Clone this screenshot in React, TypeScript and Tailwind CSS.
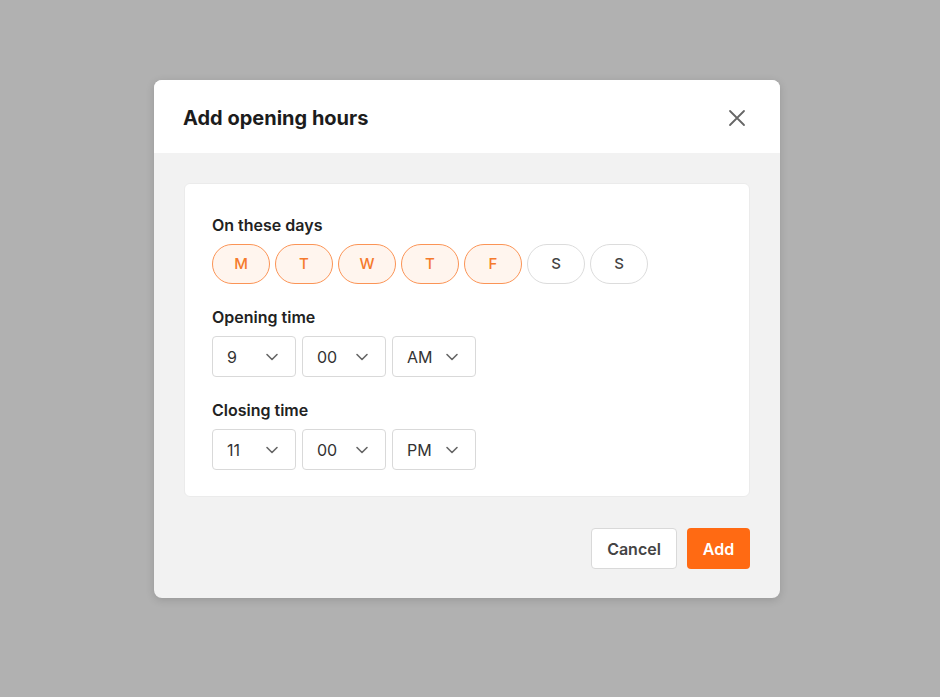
import { useState } from 'react';

const days = [
  { key: 'mon', label: 'M', on: true },
  { key: 'tue', label: 'T', on: true },
  { key: 'wed', label: 'W', on: true },
  { key: 'thu', label: 'T', on: true },
  { key: 'fri', label: 'F', on: true },
  { key: 'sat', label: 'S', on: false },
  { key: 'sun', label: 'S', on: false },
];

function Chevron() {
  return (
    <svg width="16" height="16" viewBox="0 0 16 16" fill="none" className="text-[#666]">
      <path d="M3 5.5 8 10.5 13 5.5" stroke="currentColor" strokeWidth="1.6" strokeLinecap="round" strokeLinejoin="round" />
    </svg>
  );
}

function TimeSelect({ value }: { value: string }) {
  return (
    <div className="flex h-[41px] w-[84px] items-center justify-between rounded-[4px] border border-[#d9d9d9] bg-white pl-[14px] pr-[15px] text-[16px] text-[#333]">
      <span>{value}</span>
      <Chevron />
    </div>
  );
}

export default function App() {
  const [selected, setSelected] = useState(days.map((d) => d.on));

  return (
    <div className="h-[697px] w-full bg-[#b1b1b1] pl-[154px] pt-[80px] font-['Inter',sans-serif]">
      <div className="w-[626px] overflow-hidden rounded-[8px] bg-[#f2f2f2] shadow-[0_2px_8px_rgba(0,0,0,0.15)]">
        <div className="flex h-[73px] items-center justify-between bg-white pl-[29px] pr-[33px] pt-[3px]">
          <h1 className="text-[20px] font-bold text-[#1c1c1c]">Add opening hours</h1>
          <svg width="20" height="20" viewBox="0 0 20 20" fill="none" className="text-[#666]">
            <path d="M3 3 17 17M17 3 3 17" stroke="currentColor" strokeWidth="1.8" strokeLinecap="round" />
          </svg>
        </div>

        <div className="px-[30px] pb-[29px] pt-[30px]">
          <div className="rounded-[6px] border border-[#ebebeb] bg-white px-[27px] pb-[26px] pt-[29px]">
            <div className="text-[16px] font-semibold leading-6 text-[#222]">On these days</div>
            <div className="mt-[7px] flex gap-[5px]">
              {days.map((d, i) => (
                <button
                  key={d.key}
                  onClick={() => setSelected((s) => s.map((v, j) => (j === i ? !v : v)))}
                  className={
                    selected[i]
                      ? 'h-[40px] w-[58px] rounded-full border border-[#fb9456] bg-[#fff5ee] text-[15px] font-medium text-[#f57a2c]'
                      : 'h-[40px] w-[58px] rounded-full border border-[#dcdcdc] bg-white text-[15px] font-medium text-[#444]'
                  }
                >
                  {d.label}
                </button>
              ))}
            </div>

            <div className="mt-[21px] text-[16px] font-semibold leading-6 text-[#222]">Opening time</div>
            <div className="mt-[7px] flex gap-[6px]">
              <TimeSelect value="9" />
              <TimeSelect value="00" />
              <TimeSelect value="AM" />
            </div>

            <div className="mt-[21px] text-[16px] font-semibold leading-6 text-[#222]">Closing time</div>
            <div className="mt-[7px] flex gap-[6px]">
              <TimeSelect value="11" />
              <TimeSelect value="00" />
              <TimeSelect value="PM" />
            </div>
          </div>

          <div className="mt-[31px] flex justify-end gap-[10px] pr-[-1px]">
            <button className="h-[41px] w-[86px] rounded-[4px] border border-[#d9d9d9] bg-white text-[16px] font-semibold text-[#444]">
              Cancel
            </button>
            <button className="h-[41px] w-[63px] rounded-[4px] bg-[#ff6a13] text-[16px] font-semibold text-white">
              Add
            </button>
          </div>
        </div>
      </div>
    </div>
  );
}
